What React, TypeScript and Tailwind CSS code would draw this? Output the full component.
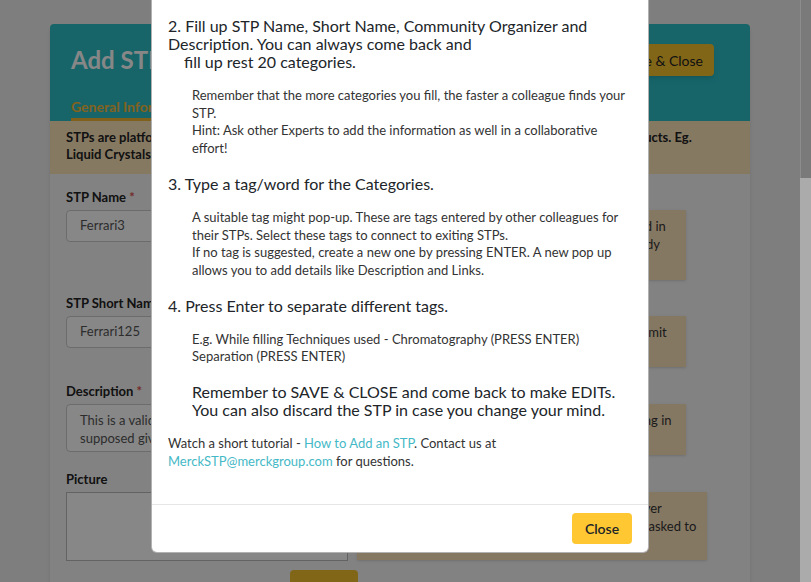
import React from "react"

const tips = [
  {
    h: "h-[70px]",
    w: "w-[329px]",
    lines: [
      "Give your STP a clearer name that people can find in",
      "the search. Check that no similar STP exists already",
      "before you create a new one.",
    ],
  },
  {
    h: "h-[51px]",
    w: "w-[329px]",
    lines: ["A short name or acronym, within a 15 character limit", "(optional)."],
  },
  {
    h: "h-[51px]",
    w: "w-[329px]",
    lines: ["Describe what colleagues can expect when landing in", "this STP."],
  },
  {
    h: "h-[68px]",
    w: "w-[350px]",
    lines: [
      "Upload a picture which is shown on the STP's cover",
      "tile. Images need to be free of rights, you may be asked to",
      "provide the source.",
    ],
  },
]

function Field({
  label,
  required,
  children,
}: {
  label: string
  required?: boolean
  children: React.ReactNode
}) {
  return (
    <div className="w-[284px] shrink-0">
      <p className="text-[13px] font-bold leading-[18px] text-[#222]">
        {label} {required && <span className="text-[#d9534f]">*</span>}
      </p>
      <div className="mt-1">{children}</div>
    </div>
  )
}

function Tip({ tip }: { tip: (typeof tips)[number] }) {
  return (
    <div
      className={`${tip.h} ${tip.w} ml-[7px] mt-[22px] overflow-hidden bg-[#fbe3bb] px-3 py-[7px] text-[13px] leading-[18px] text-[#333] shadow-sm`}
    >
      {tip.lines.map((l) => (
        <p key={l} className="whitespace-nowrap">
          {l}
        </p>
      ))}
    </div>
  )
}

function Background() {
  return (
    <div className="flex-1 px-[50px] pt-6">
      <div className="w-[700px] rounded-t bg-[#f5f5f5] shadow-md">
        <div className="flex h-[97px] flex-col justify-between rounded-t bg-[#2cbfc7] pl-[21px] pr-[36px]">
          <div className="flex items-center justify-between pt-5">
            <h1 className="text-[24px] font-bold leading-[28px] text-white">Add STP</h1>
            <button className="h-8 rounded-[4px] bg-[#f6c12f] px-[11px] text-[14px] text-[#222] shadow-md">
              Save &amp; Close
            </button>
          </div>
          <div className="flex">
            <span className="border-b-[3px] border-[#f2b733] pb-[3px] text-[14px] font-bold leading-[16px] text-[#f4b93a]">
              General Information
            </span>
          </div>
        </div>
        <div className="h-[53px] bg-[#fde4ba] px-4 py-[8px] text-[13px] font-bold leading-[17px] text-[#222]">
          <p className="whitespace-nowrap">
            STPs are platforms to share know-how on Science, Technology and the Processes behind all our products. Eg.
          </p>
          <p className="whitespace-nowrap">Liquid Crystals, OLED Materials, Effect Pigments</p>
        </div>
        <div className="px-4 pb-6 pt-[14px]">
          <div className="flex items-start">
            <Field label="STP Name" required>
              <div className="flex h-8 items-center rounded-[4px] border border-[#ccc] bg-white px-[13px] text-[13px] text-[#555]">
                Ferrari3
              </div>
            </Field>
            <Tip tip={tips[0]} />
          </div>
          <div className="mt-[14px] flex items-start">
            <Field label="STP Short Name">
              <div className="flex h-8 items-center rounded-[4px] border border-[#ccc] bg-white px-[13px] text-[13px] text-[#555]">
                Ferrari125
              </div>
            </Field>
            <Tip tip={tips[1]} />
          </div>
          <div className="mt-[15px] flex items-start">
            <Field label="Description" required>
              <div className="h-[48px] overflow-hidden rounded-[4px] border border-[#ccc] bg-white px-[13px] pt-[6px] text-[13px] leading-[18px] text-[#555]">
                This is a valid description of what the STP is supposed give to the colleagues who are following it
              </div>
            </Field>
            <Tip tip={tips[2]} />
          </div>
          <div className="mt-[15px] flex items-start">
            <div className="w-[284px] shrink-0">
              <p className="text-[13px] font-bold leading-[18px] text-[#222]">Picture</p>
              <div className="mt-1 h-[69px] w-[282px] border border-[#bbb] bg-white" />
              <div className="mt-[9px] flex justify-end">
                <button className="-mr-[8px] h-8 w-[68px] rounded-[4px] bg-[#f6c12f] text-[14px] text-[#222]">
                  Upload
                </button>
              </div>
            </div>
            <Tip tip={tips[3]} />
          </div>
        </div>
      </div>
    </div>
  )
}

export default function App() {
  return (
    <div className="relative flex h-[582px] w-full overflow-hidden bg-[#efefef] font-['Lato',sans-serif]">
      <Background />
      <div className="flex w-[11px] flex-col">
        <div className="h-[178px] border-l border-[#8c8c8c] bg-[#7a7a7a]" />
        <div className="flex-1 bg-[#ababab]" />
      </div>

      <div className="absolute inset-y-0 left-0 right-[11px] bg-black/[0.47]" />

      <div className="absolute left-[151px] top-0 w-[498px] rounded-b-md border border-t-0 border-black/30 bg-white text-[#212529]">
        <div className="px-4 pb-[34px] pt-[17px]">
          <p className="text-[16px] leading-[18px]">
            2. Fill up STP Name, Short Name, Community Organizer and
            <br />
            Description. You can always come back and
            <br />
            <span className="pl-4">fill up rest 20 categories.</span>
          </p>
          <div className="mt-4 pl-6 text-[13px] leading-[17.7px] text-[#333]">
            <p>Remember that the more categories you fill, the faster a colleague finds your STP.</p>
            <p>Hint: Ask other Experts to add the information as well in a collaborative effort!</p>
          </div>

          <p className="mt-[17px] text-[16px] leading-[18px]">3. Type a tag/word for the Categories.</p>
          <div className="mt-4 pl-6 text-[13px] leading-[17.7px] text-[#333]">
            <p>
              A suitable tag might pop-up. These are tags entered by other colleagues for their STPs. Select these
              tags to connect to exiting STPs.
            </p>
            <p>
              If no tag is suggested, create a new one by pressing ENTER. A new pop up allows you to add details like
              Description and Links.
            </p>
          </div>

          <p className="mt-[17px] text-[16px] leading-[18px]">4. Press Enter to separate different tags.</p>
          <div className="mt-4 pl-6 pr-6 text-[13px] leading-[17.7px] text-[#333]">
            <p>E.g. While filling Techniques used - Chromatography (PRESS ENTER) Separation (PRESS ENTER)</p>
          </div>

          <p className="mt-[17px] pl-6 text-[16px] leading-[18px]">
            Remember to SAVE &amp; CLOSE and come back to make EDITs.
            <br />
            You can also discard the STP in case you change your mind.
          </p>

          <p className="mt-[15px] pr-16 text-[13px] leading-[18px] text-[#333]">
            Watch a short tutorial - <a className="text-[#45b9c6]">How to Add an STP</a>. Contact us at{" "}
            <a className="text-[#45b9c6]">MerckSTP@merckgroup.com</a> for questions.
          </p>
        </div>
        <div className="flex justify-end border-t border-[#e6e6e6] px-4 py-2">
          <button className="h-[31px] w-[60px] rounded-[4px] bg-[#ffc732] text-[14px] font-semibold text-[#212529]">
            Close
          </button>
        </div>
      </div>
    </div>
  )
}
